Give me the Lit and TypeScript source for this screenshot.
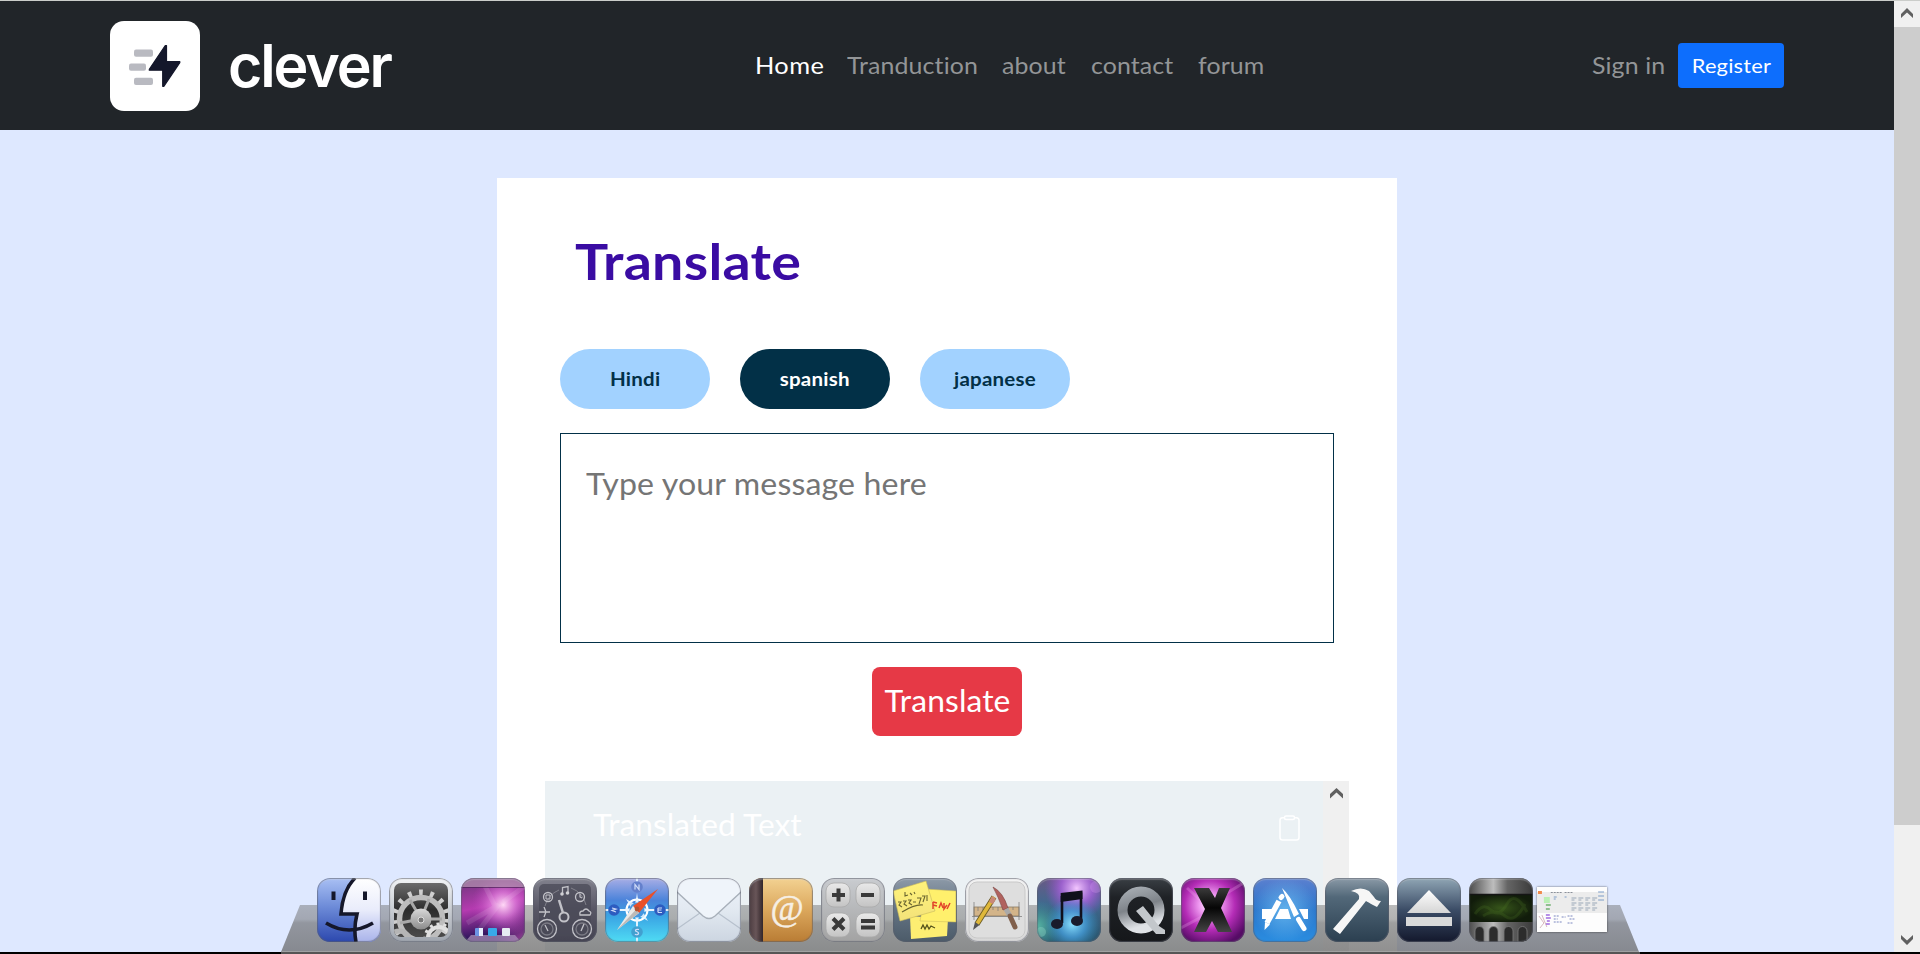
import { LitElement, html, css, svg, SVGTemplateResult } from "lit";
import { customElement, property } from "lit/decorators.js";
import { classMap } from "lit/directives/class-map.js";

const DIGITS = [0, 1, 2, 3, 4, 5, 6, 7, 8, 9, 10, 11];

const icons: Record<string, SVGTemplateResult> = {
  finder: svg`
    <defs>
      <linearGradient id="a" x2="0" y2="1"><stop stop-color="#a9c0f4"/><stop offset=".45" stop-color="#6d8bd8"/><stop offset="1" stop-color="#2c48ae"/></linearGradient>
      <linearGradient id="b" x2="0" y2="1"><stop stop-color="#fff"/><stop offset=".5" stop-color="#e9ecfb"/><stop offset="1" stop-color="#a9b3ea"/></linearGradient>
    </defs>
    <rect width="64" height="64" fill="url(#a)"/>
    <path d="M38 0C30 8 25 22 24 36H40C38 44 37 54 39 64H64V0Z" fill="url(#b)"/>
    <path d="M38 0C30 8 25 22 24 36H40C38 44 37 54 39 64M9 45Q32 59 56 45" fill="none" stroke="#15172a" stroke-width="3.600"/>
    <path d="M16.500 13.500V22M48 13.500V22" stroke="#15172a" stroke-width="4"/>`,
  settings: svg`
    <defs>
      <linearGradient id="a" x2="0" y2="1"><stop stop-color="#f2f4f6"/><stop offset="1" stop-color="#9fa5ae"/></linearGradient>
      <linearGradient id="b" x2="0" y2="1"><stop stop-color="#6b6b6b"/><stop offset=".5" stop-color="#2c2c2c"/><stop offset="1" stop-color="#4b4b4b"/></linearGradient>
      <linearGradient id="c" x2="0" y2="1"><stop stop-color="#d9d9d9"/><stop offset="1" stop-color="#8b8b8b"/></linearGradient>
      <clipPath id="k"><rect x="5" y="5" width="54" height="54" rx="7"/></clipPath>
    </defs>
    <rect width="64" height="64" fill="url(#a)"/>
    <g clip-path="url(#k)">
      <rect x="5" y="5" width="54" height="54" fill="url(#b)"/>
      <circle cx="32" cy="41" r="26.500" fill="none" stroke="#cfcfcf" stroke-width="6" stroke-dasharray="3.800 7.300"/>
      <circle cx="32" cy="41" r="21.500" fill="none" stroke="#bdbdbd" stroke-width="5.500"/>
      <path d="M32 41L21 22M32 41L40 21M32 41L53 41M32 41L11 45" stroke="#a8a8a8" stroke-width="3"/>
      <circle cx="32" cy="41" r="10.500" fill="url(#c)"/>
      <circle cx="32" cy="42" r="3" fill="#777" stroke="#ddd"/>
      <circle cx="10" cy="64" r="11" fill="none" stroke="#b5b5b5" stroke-width="5"/>
      <circle cx="50" cy="60" r="11" fill="none" stroke="#e0e0e0" stroke-width="4"/>
      <circle cx="50" cy="60" r="14" fill="none" stroke="#e0e0e0" stroke-width="3" stroke-dasharray="3 4"/>
    </g>`,
  desktop: svg`
    <defs>
      <linearGradient id="a" x2=".2" y2="1"><stop stop-color="#6a3578"/><stop offset=".5" stop-color="#b53bb0"/><stop offset="1" stop-color="#1c1050"/></linearGradient>
      <radialGradient id="b" cx=".66" cy=".42" r=".5"><stop stop-color="#ffd9f6"/><stop offset=".4" stop-color="#e17ddc" stop-opacity=".75"/><stop offset="1" stop-color="#b33bb4" stop-opacity="0"/></radialGradient>
      <radialGradient id="c" cx="1" cy="1" r=".5"><stop stop-color="#e25ac0" stop-opacity=".7"/><stop offset="1" stop-color="#c84ab4" stop-opacity="0"/></radialGradient>
    </defs>
    <rect width="64" height="64" fill="url(#a)"/><rect width="64" height="64" fill="url(#b)"/><rect width="64" height="64" fill="url(#c)"/>
    <path d="M36 28L6 45M38 26L18 52M42 24L64 8M34 28L24 8" stroke="#fff" stroke-opacity=".1" stroke-width="5"/>
    <rect width="64" height="9" fill="#b08fae" opacity=".75"/><rect y="9" width="64" height="1" fill="#3a1d48" opacity=".6"/>
    <path d="M10 57H54L60 64H4Z" fill="#a98fb8" opacity=".75"/>
    <rect x="14" y="50" width="8" height="8" rx="1" fill="#6d94e4"/><rect x="18" y="50" width="4" height="8" fill="#e8eefc"/>
    <rect x="27" y="50" width="9" height="8" rx="1" fill="#38a9e8"/><rect x="41" y="50" width="8" height="8" rx="1" fill="#e6ecf2"/>`,
  dashboard: svg`
    <defs><linearGradient id="a" x2="0" y2="1"><stop stop-color="#82828e"/><stop offset=".5" stop-color="#575664"/><stop offset="1" stop-color="#454452"/></linearGradient></defs>
    <rect width="64" height="64" fill="url(#a)"/>
    <rect x="6" y="6" width="52" height="52" rx="5" fill="#4a4957" opacity=".75"/>
    <g fill="none" stroke="#c2c2c8" stroke-width="1.300">
      <path d="M26 12A24 24 0 0 0 12 28M38 10A24 24 0 0 1 53 27" stroke-width=".7" stroke-opacity=".6"/>
      <circle cx="15" cy="19" r="4.500"/><path d="M13 17h4v4h-4z" stroke-width="1"/>
      <circle cx="47" cy="19" r="4.500"/><path d="M47 16V19L49 20" stroke-width="1.200"/>
      <path d="M26 22L30 35" stroke-width="2.500"/><circle cx="31" cy="39" r="4.500" stroke-width="2"/>
      <path d="M29.500 16V9.500L35 8.500V15"/><path d="M6 34H17M11 29L13 34L11 39"/>
      <path d="M47 37Q46 33 50 33Q53 29 56 33Q59 34 57 37Z"/>
      <circle cx="14" cy="51" r="9.500"/><circle cx="14" cy="51" r="6" stroke-opacity=".4"/><path d="M12 47L15 53"/>
      <circle cx="49" cy="51" r="9.500"/><circle cx="49" cy="51" r="6" stroke-opacity=".4"/><path d="M51 46L48 53"/>
    </g>
    <circle cx="29" cy="16" r="1.800" fill="#d0d0d4"/><circle cx="34.500" cy="15" r="1.800" fill="#d0d0d4"/>`,
  compass: svg`
    <defs><linearGradient id="a" x2="0" y2="1"><stop stop-color="#a9aee6"/><stop offset=".35" stop-color="#4a83da"/><stop offset=".6" stop-color="#3aa4e4"/><stop offset="1" stop-color="#4fdcf4"/></linearGradient></defs>
    <rect width="64" height="64" fill="url(#a)"/>
    <path d="M32 0V12M32 20V64M0 32H64" stroke="#e6f4ff" stroke-width="1.800"/>
    <circle cx="32" cy="32" r="10.500" fill="none" stroke="#fff" stroke-width="2"/>
    <path d="M32 15L34 26L43 21L38 30L50 32L38 34L43 43L34 38L32 50L30 38L21 43L26 34L14 32L26 30L21 21L30 26Z" fill="#eaf6ff" opacity=".85"/>
    <circle cx="32" cy="32" r="7.500" fill="#4796df"/>
    <circle cx="32" cy="9" r="5.800" fill="#6480cc"/><g fill="#2d5cc0"><circle cx="9" cy="32" r="5.800"/><circle cx="55" cy="32" r="5.800"/></g><circle cx="32" cy="54" r="5.800" fill="#42a0d0"/>
    <g fill="none" stroke="#d0dcf8" stroke-width="1.200"><path d="M30 11.500V6.500L34 11.500V6.500M7 30L11 31L7 32.500L11 34M53 30V34.500M53 30H57M53 32H56.500M53 34.500H57M34 51.500Q30 51 30.500 53Q34 54 33.500 56Q31 57.500 30 56"/></g>
    <path d="M53 11L28 28L34 35Z" fill="#e8502a"/><path d="M12 52L28 28L34 35Z" fill="#eceae8"/><path d="M12 52L31 31.500L34 35Z" fill="#bdbab8"/><circle cx="32" cy="31" r="2.400" fill="#b4532f"/>`,
  mail: svg`
    <defs><linearGradient id="a" x2="0" y2="1"><stop stop-color="#eef3fb"/><stop offset=".5" stop-color="#e2e9f1"/><stop offset="1" stop-color="#ccd5e1"/></linearGradient></defs>
    <rect width="64" height="64" fill="url(#a)"/>
    <path d="M0 51L23 35M64 51L41 35" stroke="#b7c1cd" stroke-width="1.200"/>
    <path d="M0 14L26 38Q32 43 38 38L64 14V0H0Z" fill="#eff4fa"/>
    <path d="M0 14L26 38Q32 43 38 38L64 14" fill="none" stroke="#a8b0ba" stroke-width="1.400"/>`,
  contacts: svg`
    <defs>
      <linearGradient id="a" x2="0" y2="1"><stop stop-color="#f3d292"/><stop offset=".5" stop-color="#dba75c"/><stop offset="1" stop-color="#b97c34"/></linearGradient>
      <linearGradient id="b"><stop stop-color="#4b3c40"/><stop offset=".5" stop-color="#685558"/><stop offset="1" stop-color="#32262a"/></linearGradient>
    </defs>
    <rect width="64" height="64" fill="url(#a)"/><rect width="14" height="64" fill="url(#b)"/>
    <text x="38" y="42" text-anchor="middle" font-family="Liberation Serif, serif" font-size="36" fill="#f6efe4" stroke="#f6efe4" stroke-width=".5">@</text>`,
  calculator: svg`
    <defs>
      <linearGradient id="a" x2="0" y2="1"><stop stop-color="#c9ccd0"/><stop offset="1" stop-color="#a2a2a2"/></linearGradient>
      <linearGradient id="b" x2="0" y2="1"><stop stop-color="#e9e9e9"/><stop offset="1" stop-color="#c4c4c4"/></linearGradient>
    </defs>
    <rect width="64" height="64" fill="url(#a)"/>
    <g fill="url(#b)" stroke="#aaa" stroke-width=".8"><rect x="5" y="5" width="24" height="24" rx="8"/><rect x="35" y="5" width="24" height="24" rx="8"/><rect x="5" y="35" width="24" height="24" rx="8"/><rect x="35" y="35" width="24" height="24" rx="8"/></g>
    <path d="M11 17H24M17.500 10.500V23.500M40 17H53M12 40.500L23 51.500M23 40.500L12 51.500M40 43H54M40 49.500H54" stroke="#3a3a3a" stroke-width="4"/>`,
  stickies: svg`
    <defs>
      <linearGradient id="a" x2="0" y2="1"><stop stop-color="#8d9aa8"/><stop offset=".5" stop-color="#637383"/><stop offset="1" stop-color="#4c5b69"/></linearGradient>
      <linearGradient id="b" x2="0" y2="1"><stop stop-color="#fff37a"/><stop offset="1" stop-color="#f3e27a"/></linearGradient>
    </defs>
    <rect width="64" height="64" fill="url(#a)"/>
    <path d="M17 38L55 41L54 58L18 61Z" fill="#fdee72"/>
    <path d="M33 11L63 13L63 44L27 43Z" fill="#fff06c" stroke="#c8b95c" stroke-width=".5"/>
    <path d="M0 13L33 3L42 33L7 43Z" fill="url(#b)" stroke="#c8b95c" stroke-width=".6"/>
    <path d="M12 14V18L15 17M17 15L19 17M21 14L22 16M5 24H8L6 27L9 29M10 23H13L11 26L14 28M15 22H18L16 25L19 27M20 24H23M24 20H28L26 26M29 18H32L30 24M34 17V23M9 34Q22 26 30 27" stroke="#6b6630" fill="none" stroke-width="1.100"/>
    <path d="M40 24V31M40 24L44 25M40 27L44 28M46 30L48 25L50 30M51 25V31L54 27M57 25L54 31" stroke="#e2442b" fill="none" stroke-width="1.500"/>
    <path d="M28 51L30 47L32 51L34 47L36 51L38 48L42 50" stroke="#55521c" fill="none" stroke-width="1.300"/>`,
  applications: svg`
    <defs><linearGradient id="a" x2="0" y2="1"><stop stop-color="#f4f4f4"/><stop offset="1" stop-color="#d8d8d8"/></linearGradient></defs>
    <rect width="64" height="64" fill="url(#a)"/><rect x="4" y="4" width="56" height="56" rx="8" fill="#dedede" stroke="#c8c8c8"/>
    <rect x="9" y="29" width="45" height="9" fill="#d3b489" stroke="#8e7c62" stroke-width=".8"/>
    <path d="M13 29V33M18 29V32M23 29V33M28 29V32M33 29V33M38 29V32M43 29V33M48 29V32M7 38.500H57M9 24V42M54 24V42" stroke="#777" stroke-width=".7"/>
    <path d="M29 19L12 46" stroke="#6a5a22" stroke-width="5.500"/><path d="M29 19L12 46" stroke="#e0b83a" stroke-width="3.800"/><path d="M8 52L10 44L14.500 47Z" fill="#555"/><path d="M31 21L28 26L24 24L27 18Z" fill="#c98878"/>
    <path d="M28 9Q38 14 43 30L38 32Q33 18 28 9Z" fill="#b0625e" stroke="#7c4543" stroke-width=".6"/>
    <path d="M41 31L45 38" stroke="#a9a9a9" stroke-width="5"/><path d="M45 38L50 49" stroke="#81604c" stroke-width="5" stroke-linecap="round"/>`,
  music: svg`
    <defs>
      <linearGradient id="a" x2="0" y2="1"><stop stop-color="#6a5a86"/><stop offset=".4" stop-color="#41688e"/><stop offset="1" stop-color="#28566e"/></linearGradient>
      <radialGradient id="b" cx=".62" cy=".16" r=".5"><stop stop-color="#f3c6ff"/><stop offset=".5" stop-color="#a961dd" stop-opacity=".8"/><stop offset="1" stop-color="#9049c9" stop-opacity="0"/></radialGradient>
      <radialGradient id="c" cx=".55" cy=".72" r=".42"><stop stop-color="#8be1ff"/><stop offset=".5" stop-color="#459cd8" stop-opacity=".8"/><stop offset="1" stop-color="#3493c7" stop-opacity="0"/></radialGradient>
      <radialGradient id="d" cx="0" cy=".75" r=".4"><stop stop-color="#58b8a4"/><stop offset="1" stop-color="#3a9a94" stop-opacity="0"/></radialGradient>
    </defs>
    <rect width="64" height="64" fill="url(#a)"/><rect width="64" height="64" fill="url(#d)"/><rect width="64" height="64" fill="url(#b)"/><rect width="64" height="64" fill="url(#c)"/>
    <circle cx="4" cy="54" r="5" fill="#8fd4c4" opacity=".4"/><circle cx="59" cy="9" r="6" fill="#d49af0" opacity=".3"/>
    <path d="M25 45V19L44 16V42" fill="none" stroke="#10101c" stroke-width="2.600"/><path d="M23.700 15L45.500 12.500V21L23.700 24Z" fill="#10101c"/>
    <ellipse cx="20" cy="46" rx="6" ry="5" fill="#191b2c"/><ellipse cx="40" cy="43" rx="6" ry="5" fill="#191b2c"/>`,
  quicktime: svg`
    <defs>
      <linearGradient id="a" x2="0" y2="1"><stop stop-color="#3a3f45"/><stop offset=".3" stop-color="#1f2226"/><stop offset="1" stop-color="#15171a"/></linearGradient>
      <linearGradient id="b" x2=".3" y2="1"><stop stop-color="#a4aab0"/><stop offset=".5" stop-color="#7e8389"/><stop offset="1" stop-color="#dfe2e6"/></linearGradient>
    </defs>
    <rect width="64" height="64" fill="url(#a)"/>
    <circle cx="32" cy="32" r="18.500" fill="none" stroke="url(#b)" stroke-width="10"/>
    <path d="M27 33L34 28L50 48L56 52V56H47Z" fill="#c3c7cb"/>`,
  xapp: svg`
    <defs>
      <radialGradient id="a" cx=".45" cy=".42" r=".65"><stop stop-color="#fff"/><stop offset=".25" stop-color="#f09cf2"/><stop offset=".6" stop-color="#b42cb6"/><stop offset="1" stop-color="#560c66"/></radialGradient>
      <linearGradient id="b" x2="0" y2="1"><stop stop-color="#3a3a3a"/><stop offset=".45" stop-color="#060606"/><stop offset="1" stop-color="#444"/></linearGradient>
    </defs>
    <rect width="64" height="64" fill="url(#a)"/><path d="M28 26L64 4M30 34L0 50M26 28L6 10" stroke="#f7b4f4" stroke-opacity=".25" stroke-width="3"/>
    <path d="M13 10H28L34 20L38 10H49L40 30L51 54H37L31 43L25 54H13L24 31Z" fill="url(#b)"/>`,
  store: svg`
    <defs>
      <linearGradient id="a" x2="0" y2="1"><stop stop-color="#5c80cf"/><stop offset=".5" stop-color="#2a76cc"/><stop offset="1" stop-color="#2a8de0"/></linearGradient>
      <radialGradient id="b" cx=".5" cy=".5" r=".5"><stop stop-color="#6ec0f4" stop-opacity=".8"/><stop offset="1" stop-color="#6ec0f4" stop-opacity="0"/></radialGradient>
    </defs>
    <rect width="64" height="64" fill="url(#a)"/><rect width="64" height="64" fill="url(#b)"/>
    <path d="M9 31H20L17 41H9ZM27 31H35L38 41H22ZM46 31H55V41H51Z" fill="#fff"/>
    <path d="M26 23L14 45" stroke="#fff" stroke-width="5.500"/><path d="M11.500 52L12 44L17 46.500Z" fill="#fff"/><path d="M28 19.500L29 18.500" stroke="#fff" stroke-width="5" stroke-linecap="round"/>
    <path d="M29 10Q37 17 46 36L41 39Q34 22 29 10Z" fill="#fff"/><path d="M45.500 41.500L51 50.500" stroke="#fff" stroke-width="5" stroke-linecap="round"/>`,
  hammer: svg`
    <defs><linearGradient id="a" x2="0" y2="1"><stop stop-color="#8b9aa7"/><stop offset=".3" stop-color="#526879"/><stop offset="1" stop-color="#2b3f50"/></linearGradient></defs>
    <rect width="64" height="64" fill="url(#a)"/>
    <path d="M26 13Q36 8 44 13L49 19Q51 23 56 23L52 29L48 27Q43 24 41 23L15 56L8 51L34 21Q36 15 26 13Z" fill="#f6f6f6"/>`,
  eject: svg`
    <defs>
      <linearGradient id="a" x2="0" y2="1"><stop stop-color="#90a6b5"/><stop offset=".5" stop-color="#3b4c66"/><stop offset="1" stop-color="#13182c"/></linearGradient>
      <linearGradient id="b" x2="0" y2="1"><stop stop-color="#fff"/><stop offset="1" stop-color="#d5d5d5"/></linearGradient>
    </defs>
    <rect width="64" height="64" fill="url(#a)"/><path d="M32 12L54 35H10Z" fill="url(#b)"/><rect x="9" y="39" width="46" height="9" fill="#d9d9d9"/>`,
  terminal: svg`
    <defs>
      <linearGradient id="a"><stop stop-color="#4b4b4b"/><stop offset=".38" stop-color="#bdbdbd"/><stop offset=".6" stop-color="#656565"/><stop offset="1" stop-color="#3a3a3a"/></linearGradient>
      <radialGradient id="b"><stop stop-color="#36551a"/><stop offset="1" stop-color="#111c0b"/></radialGradient>
    </defs>
    <rect width="64" height="64" fill="url(#a)"/><rect y="16" width="64" height="28" fill="url(#b)"/><path d="M0 16.500H64" stroke="#151515" stroke-width="1.500"/>
    <path d="M6 36Q14 24 22 32T38 26T58 34M14 38Q26 30 36 38T56 26" fill="none" stroke="#54822a" stroke-width="3" opacity=".2"/>
    <g fill="#2c2c2c" stroke="#7c7c7c" stroke-width=".8"><path d="M6 64V53a4.500 4.500 0 0 1 9 0V64ZM20 64V53a4.500 4.500 0 0 1 9 0V64ZM35 64V53a4.500 4.500 0 0 1 9 0V64ZM49 64V53a4.500 4.500 0 0 1 9 0V64Z"/></g>`,
};

@customElement("dock-icon")
export class DockIcon extends LitElement {
  @property() name = "finder";
  static styles = css`
    :host { display: block; width: 64px; height: 64px; }
    .tile { width: 64px; height: 64px; border-radius: 13px; overflow: hidden; position: relative; }
    .tile::after { content: ""; position: absolute; inset: 0; border-radius: 13px; box-shadow: inset 0 0 1px 1px rgba(90, 94, 106, 0.6), inset 0 2px 1px rgba(255, 255, 255, 0.25); }
    svg { display: block; }
  `;
  render() {
    return html`<div class="tile"><svg width="64" height="64" viewBox="0 0 64 64">${icons[this.name]}</svg></div>`;
  }
}

@customElement("mac-dock")
export class MacDock extends LitElement {
  static styles = css`
    :host { display: block; height: 76px; width: 1359px; }
    .wrap { position: relative; height: 76px; }
    .shelf { position: absolute; left: 0; bottom: 0; display: block; }
    .row { position: relative; display: flex; gap: 8px; padding-left: 35.5px; align-items: flex-start; }
    .thumb { margin: 9px 0 0 -4px; width: 70px; height: 45px; display: block; box-shadow: 0 0 2px rgba(0, 0, 0, 0.6); }
  `;
  render() {
    return html`<div class="wrap">
      <svg class="shelf" width="1359" height="49" viewBox="0 0 1359 49">
        <defs>
          <linearGradient id="s" x2="0" y2="1">
            <stop stop-color="#6c6c6c" stop-opacity=".46"/><stop offset=".3" stop-color="#6c6c6c" stop-opacity=".52"/>
            <stop offset=".38" stop-color="#646464" stop-opacity=".62"/><stop offset="1" stop-color="#646464" stop-opacity=".72"/>
          </linearGradient>
        </defs>
        <path d="M19 0H1339L1358 47H0Z" fill="url(#s)"/>
        <rect x="1" y="46" width="1357" height="1" fill="#b0b0b0" opacity=".6"/>
        <rect y="47" width="1359" height="2" fill="#555"/>
      </svg>
      <div class="row">
        ${Object.keys(icons).map((n) => html`<dock-icon name=${n}></dock-icon>`)}
        <svg class="thumb" viewBox="0 0 71 45" preserveAspectRatio="none">
          <rect width="71" height="45" fill="#fdfdfd"/><rect y="5" width="71" height="21" fill="#ececec"/>
          <rect x="1" y="4" width="4" height="3" fill="#f08a4c"/><path d="M14 5.500H25M28 5.500H36" stroke="#8a8f98" stroke-dasharray="2 1"/>
          <rect x="7" y="10" width="6" height="6" fill="#b9efb4"/><path d="M9 18H14M9 22H13" stroke="#70b070" stroke-width="1.500"/>
          ${DIGITS.map((i) => svg`<path d="M${35 + (i % 4) * 7} ${11 + Math.floor(i / 4) * 5}h5m-5 2h3" stroke="#9aa8b8" stroke-width="1"/>`)}
          <path d="M17 10h3m-3 2h2M28 10h2M62 5h6M62 9h6M62 13h6" stroke="#7c9cc8"/>
          <path d="M2 29L7 36L3 41M5 28L10 40" stroke="#d8b8c0" fill="none"/><path d="M9 28h4m-4 3h5m-4 3h3m-4 3h4" stroke="#a06ae0" stroke-width="1.500"/>
          <path d="M17 29h6m-6 3h4m4 -2h4m-12 5h9m5 -6h6m-4 3h6m-8 4h5" stroke="#7a86c0" stroke-dasharray="2 1"/>
        </svg>
      </div>
    </div>`;
  }
}

@customElement("app-root")
export class AppRoot extends LitElement {
  static styles = css`
    :host { display: block; font-family: Lato, "Open Sans", sans-serif; font-variant-ligatures: none; }
    * { box-sizing: border-box; }
    .screen { position: relative; width: 1920px; height: 954px; overflow: hidden; display: flex; flex-direction: column; background: #000; }
    .topline { height: 1px; background: #cbcdca; flex: none; }
    .window { height: 951px; display: flex; }
    .page { width: 1894px; background: #dee8ff; display: flex; flex-direction: column; align-items: center; overflow: hidden; }
    .nav { width: 100%; height: 129px; background: #212529; display: flex; align-items: center; padding: 0 110px; flex: none; font-size: 23.5px; }
    .logo { width: 90px; height: 90px; display: block; }
    .brand { font: 600 59px/80px Inter, sans-serif; letter-spacing: -2.1px; color: #fff; margin-left: 28px; width: 526.5px; padding-top: 1px; }
    .links { display: grid; grid-template-columns: 92px 155.5px 88.5px 107.5px 100px; width: 837px; line-height: 30px; color: #939597; }
    .links, .signin { margin-top: -2px; }
    .wide { display: inline-block; white-space: nowrap; transform-origin: 0 50%; transform: scaleX(1.06); letter-spacing: 0.1px; }
    .on { color: #fff; transform: scaleX(1.08); letter-spacing: 0.35px; }
    .signin { color: #939597; line-height: 30px; width: 86.5px; }
    .register { width: 106px; height: 45px; border-radius: 4px; background: #0d6efd; color: #fff; font: 20px/42px Lato, sans-serif; border: 0; padding: 0 0 2px; text-align: center; }
    .register .wide, .pill .wide, .go .wide { transform-origin: 50% 50%; }
    .register .wide { transform: scaleX(1.09); letter-spacing: 0.2px; }
    .card { width: 900px; height: 800px; margin-top: 48px; background: #fff; display: flex; flex-direction: column; align-items: center; flex: none; padding: 0 48px; }
    .title { margin: 51px 0 0; padding-left: 30px; align-self: stretch; font-size: 50px; line-height: 64px; color: #3a0ca3; }
    .title .wide { transform: scaleX(1.11); letter-spacing: 0.27px; }
    .pills { display: flex; gap: 30px; align-self: stretch; padding-left: 15px; margin-top: 56px; }
    .pill { width: 150px; height: 60px; border: 0; border-radius: 30px; background: #a2d2ff; color: #023047; font: 700 18px/59px Lato, sans-serif; padding: 1px 0 0; text-align: center; }
    .pill .wide { transform: scaleX(1.14); letter-spacing: 0.2px; }
    .dark { background: #023047; color: #fff; }
    .box { width: 774px; height: 210px; margin-top: 24px; border: 1px solid #023047; padding: 30.5px 24.5px; font-size: 30px; line-height: 36px; color: #757575; flex: none; }
    .box .wide { transform: scaleX(1.07); letter-spacing: 0.12px; }
    .go { width: 150px; height: 69px; margin-top: 24px; border: 0; border-radius: 8px; background: #e63946; color: #fff; font: 30px/66px Lato, sans-serif; padding: 0 0 3px; text-align: center; flex: none; }
    .result { width: 804px; height: 240px; margin-top: 45px; background: #ebf1f4; display: flex; flex: none; }
    .restext { flex: 1; display: flex; justify-content: space-between; padding: 23.5px 22.5px 0 48px; color: #fff; font-size: 30px; line-height: 38px; }
    .restext .wide { height: 38px; transform: scaleX(1.055); letter-spacing: 0.05px; }
    .clip { margin-top: 10px; width: 21px; height: 26px; }
    .inner { width: 26.5px; background: #f0f0f0; padding: 7px 0 0 7px; }
    .inner svg { display: block; }
    .bar { width: 26px; background: #f0f0f0; display: flex; flex-direction: column; align-items: center; }
    .thumb { width: 26px; height: 798px; background: #cdcdcd; }
    .cell { height: 26px; width: 26px; display: block; }
    .spacer { flex: 1; }
    .dock { position: absolute; left: 281px; bottom: 0; }
  `;

  render() {
    const links = ["Home", "Tranduction", "about", "contact", "forum"];
    const langs = ["Hindi", "spanish", "japanese"];
    return html`<div class="screen">
      <div class="topline"></div>
      <div class="window">
        <main class="page">
          <nav class="nav">
            <svg class="logo" viewBox="0 0 90 90">
              <rect width="90" height="90" rx="14" fill="#fff"/>
              <g fill="#b9bac1"><rect x="24" y="28.500" width="19" height="7.300" rx="2"/><rect x="19" y="42.500" width="17" height="7.300" rx="2"/><rect x="24" y="56.800" width="19" height="7.300" rx="2"/></g>
              <path d="M55.300 24.500H56.500V40.500H69.800V41.700L53.800 65.300H52.700V49.200H39.300V48.300Z" fill="#14172b" stroke="#14172b" stroke-width="1.200" stroke-linejoin="round"/>
            </svg>
            <span class="brand">clever</span>
            <div class="links">${links.map((l, i) => html`<div><span class=${classMap({ wide: true, on: i === 0 })}>${l}</span></div>`)}</div>
            <div class="signin"><span class="wide">Sign in</span></div>
            <button class="register"><span class="wide">Register</span></button>
          </nav>
          <section class="card">
            <h1 class="title"><span class="wide">Translate</span></h1>
            <div class="pills">${langs.map((l, i) => html`<button class=${classMap({ pill: true, dark: i === 1 })}><span class="wide">${l}</span></button>`)}</div>
            <div class="box"><span class="wide">Type your message here</span></div>
            <button class="go"><span class="wide">Translate</span></button>
            <div class="result">
              <div class="restext"><span class="wide">Translated Text</span>
                <svg class="clip" viewBox="0 0 21 26" fill="none" stroke="#fff" stroke-width="1.500"><path d="M5.500 2.800H3.500Q1 2.800 1 5.300V22.500Q1 25 3.500 25H17.500Q20 25 20 22.500V5.300Q20 2.800 17.500 2.800H15.500"/><path d="M5.500 2.500Q5.500 1 7 1H14Q15.500 1 15.500 2.500V3Q15.500 4.500 14 4.500H7Q5.500 4.500 5.500 3Z"/></svg>
              </div>
              <div class="inner"><svg width="13" height="11" viewBox="0 0 13 11"><path d="M0 6L6.500 0L13 6V10.500L6.500 4.500L0 10.500Z" fill="#606060"/></svg></div>
            </div>
          </section>
        </main>
        <aside class="bar">
          <svg class="cell" viewBox="0 0 26 26"><path d="M7 13L13 7L19 13V17L13 11.500L7 17Z" fill="#606060"/></svg>
          <div class="thumb"></div>
          <div class="spacer"></div>
          <svg class="cell" viewBox="0 0 26 26"><path d="M7 9L13 14.500L19 9V13L13 19L7 13Z" fill="#606060"/></svg>
        </aside>
      </div>
      <mac-dock class="dock"></mac-dock>
    </div>`;
  }
}
